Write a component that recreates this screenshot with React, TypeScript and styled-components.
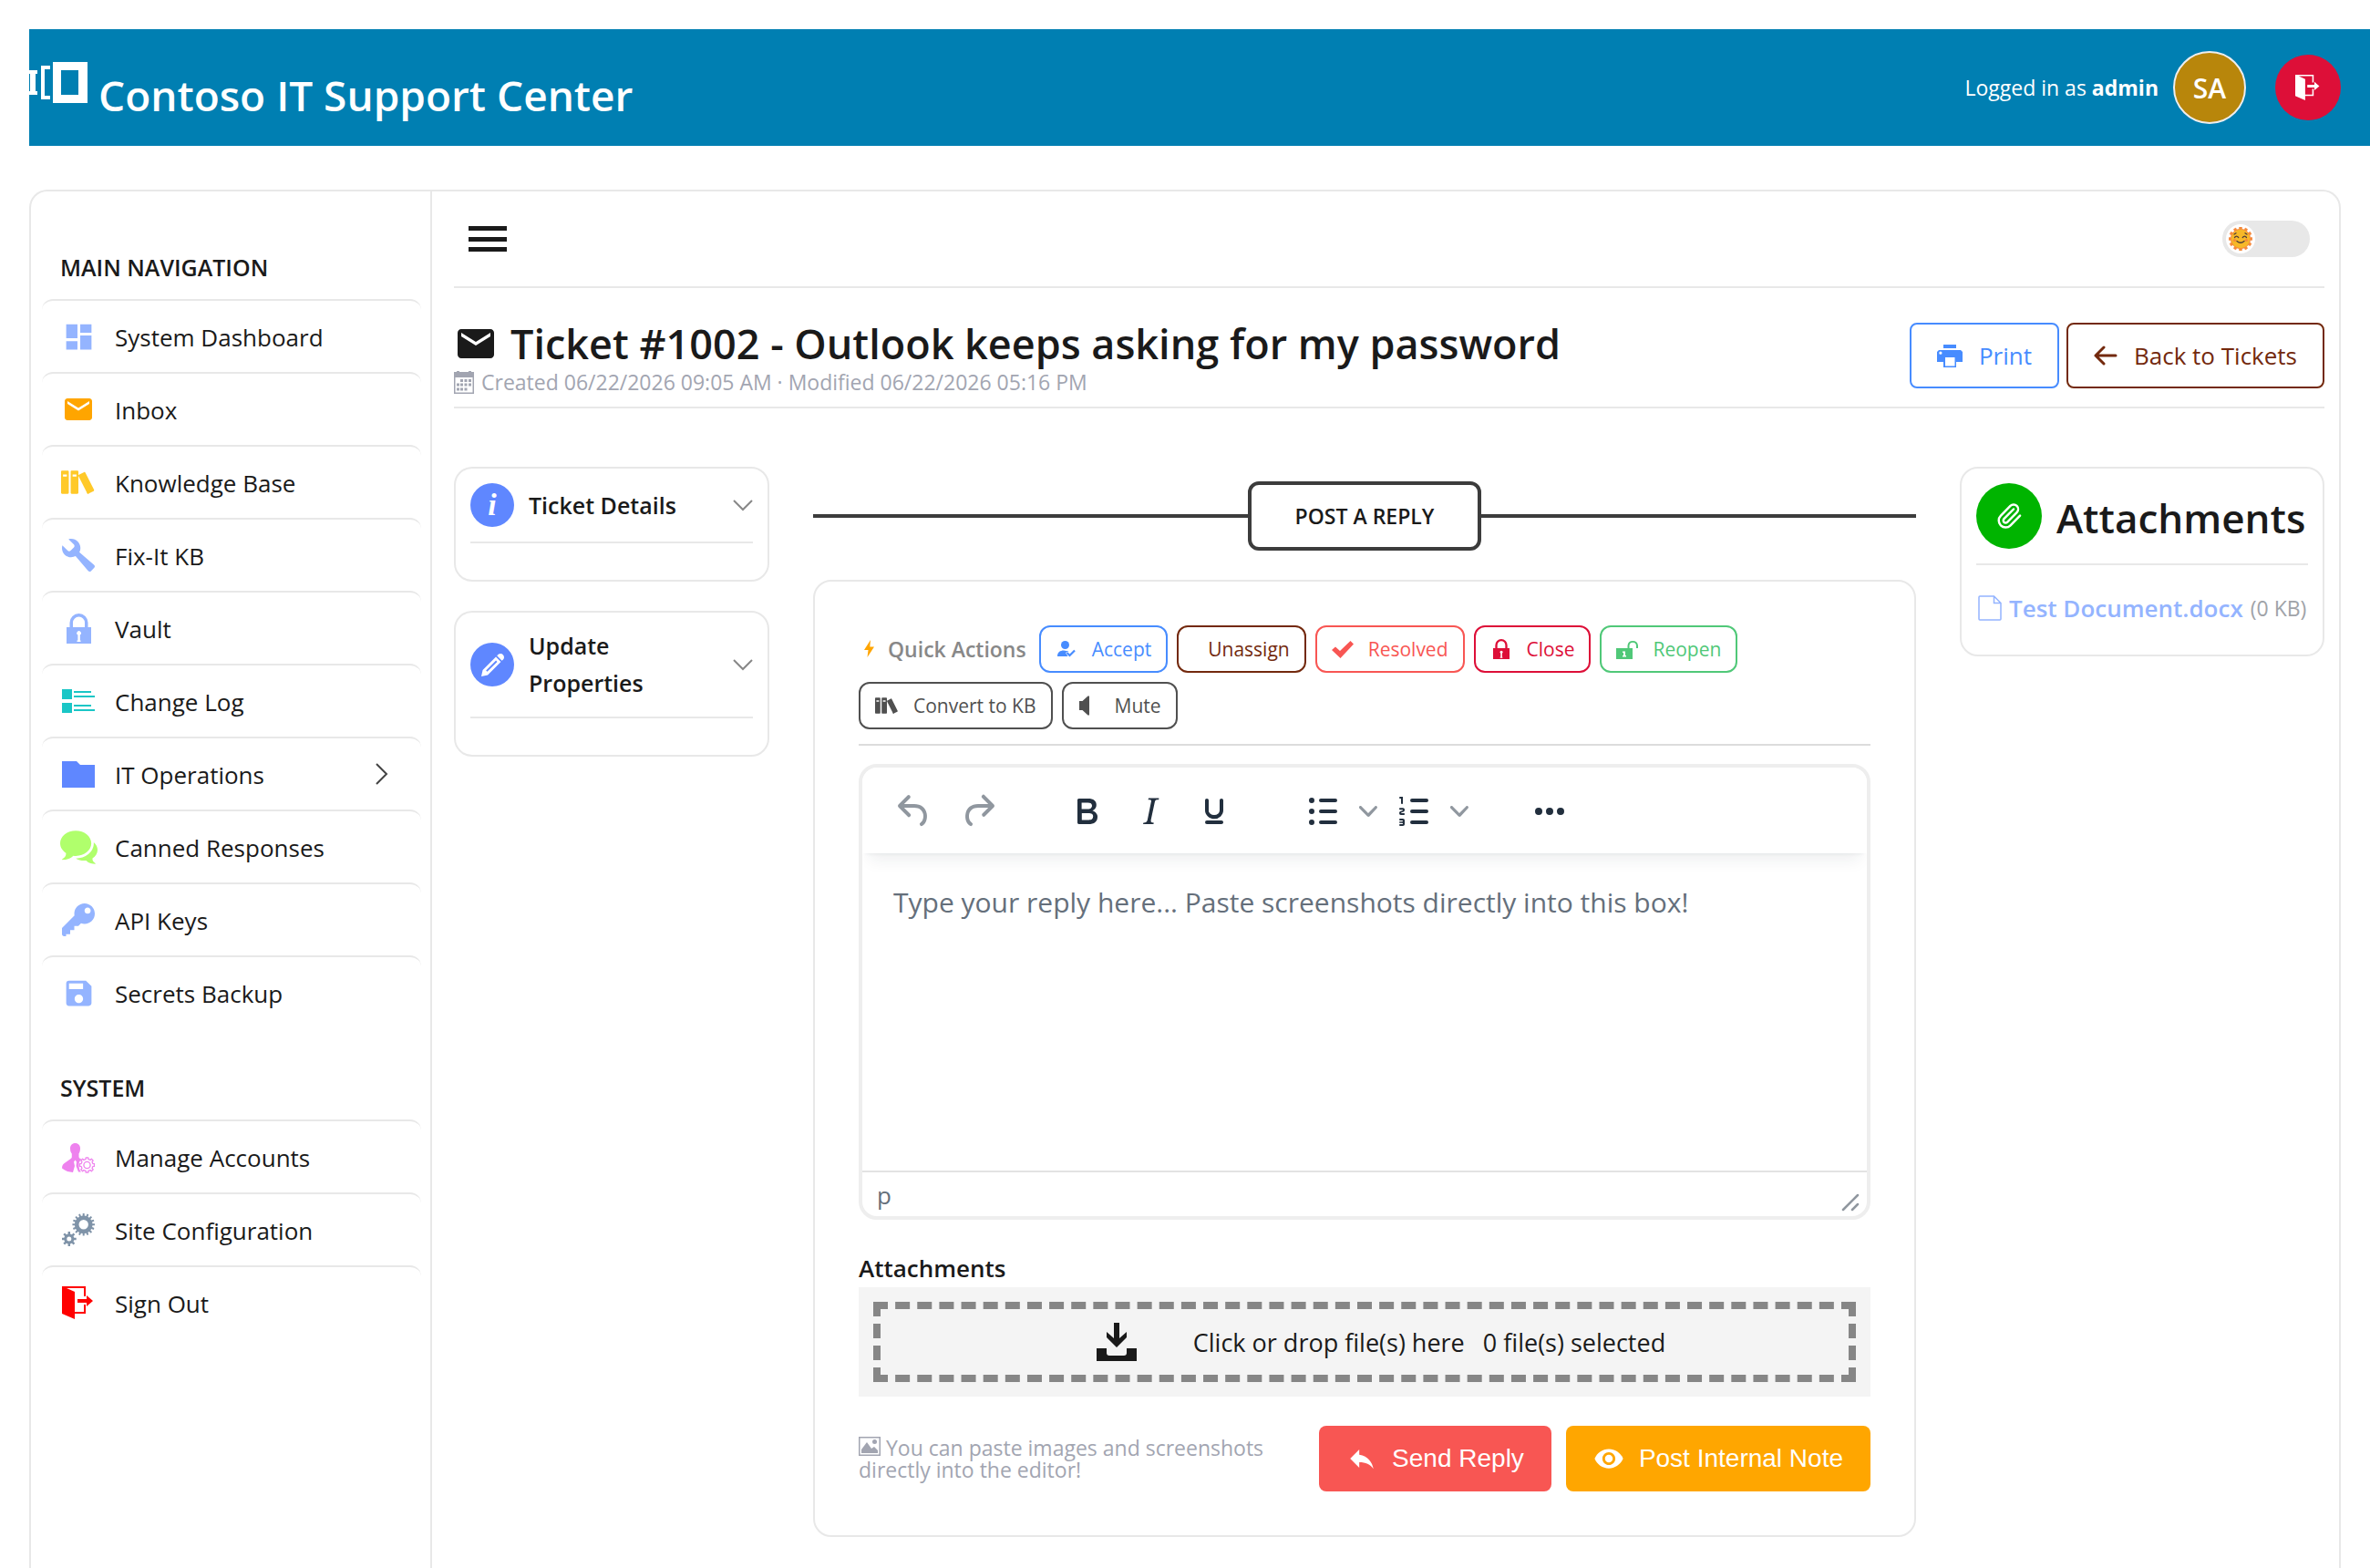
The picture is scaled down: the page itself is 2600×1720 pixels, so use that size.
import React, { useState } from "react";
import styled, { createGlobalStyle } from "styled-components";
import { MdDashboard, MdEmail, MdReply, MdSave, MdVisibility } from "react-icons/md";
import { ImBooks, ImBubbles2, ImKey, ImPencil, ImWrench } from "react-icons/im";
import { Paperclip } from "lucide-react";

const ink = "#1a1a1a";
const line = "#e8e8e8";
const softBlue = "#94b4ff";
const royal = "#5f87ff";
const muted = "#a2a5b1";
const tool = "#222f3e";

const GlobalStyle = createGlobalStyle`
  *, *::before, *::after { box-sizing: border-box; }
  body {
    margin: 0;
    background: #fff;
    color: ${ink};
    font-family: "Open Sans", "Noto Sans", sans-serif;
    font-size: 26px;
  }
  h1, h2, h3, p, ul { margin: 0; padding: 0; }
  button, textarea, input { font-family: inherit; }
  button { cursor: pointer; }
  svg { display: block; flex: none; }
`;

/* ---------- icons ---------- */

const gear = (cx: number, cy: number, outer: number, inner: number, teeth: number) => {
  const pts: string[] = [];
  const step = (Math.PI * 2) / teeth;
  for (let i = 0; i < teeth; i++) {
    const a = i * step - Math.PI / 2;
    [
      [-0.27, inner],
      [-0.2, outer],
      [0.2, outer],
      [0.27, inner],
    ].forEach(([k, r]) => {
      pts.push(`${(cx + Math.cos(a + k * step) * r).toFixed(2)} ${(cy + Math.sin(a + k * step) * r).toFixed(2)}`);
    });
  }
  return `M${pts.join("L")}Z`;
};
const hole = (cx: number, cy: number, r: number) =>
  `M${cx - r} ${cy}a${r} ${r} 0 1 0 ${2 * r} 0a${r} ${r} 0 1 0 ${-2 * r} 0Z`;

const ExitIcon = ({ size = 36 }: { size?: number }) => (
  <svg width={size} height={size} viewBox="0 0 36 36" fill="currentColor" aria-hidden="true">
    <path d="M0 0H26V11H24V2H5L14 6V28H24V20H26V30H14V36L0 30Z" />
    <path d="M17 14H27V10L34 16L27 22V18H17Z" />
  </svg>
);
const LockIcon = ({ width = 27, height = 33 }: { width?: number; height?: number }) => (
  <svg width={width} height={height} viewBox="0 0 27 33" fill="currentColor" aria-hidden="true">
    <path d="M3.5 15V10a10 10 0 0 1 20 0V15H27V33H0V15ZM7 15H20V10a6.5 6.5 0 0 0-13 0ZM12.4 23.5V29.5H11.500V31H15.500V29.500H14.800V23.500A2.300 2.300 0 1 0 12.400 23.500Z" fillRule="evenodd" />
  </svg>
);
const UnlockIcon = () => (
  <svg width="24" height="22" viewBox="0 0 24 22" fill="currentColor" aria-hidden="true">
    <path d="M0 10H12.500V7a5.800 5.800 0 0 1 11.500 0V10H22V7a3.800 3.800 0 0 0-7.500 0V10H18V22H0ZM7 13.500V15H8V18H7V19.500H11V18H10V13.500Z" fillRule="evenodd" />
  </svg>
);
const ChangeLogIcon = () => (
  <svg width="36" height="26" viewBox="0 0 36 26" fill="currentColor" aria-hidden="true">
    <path d="M0 0H11V11H0ZM13 2H32V4H13ZM13 7H36V9H13ZM0 15H11V26H0ZM13 17H32V19H13ZM13 22H36V24H13Z" />
  </svg>
);
const FolderIcon = () => (
  <svg width="36" height="29" viewBox="0 0 36 29" fill="currentColor" aria-hidden="true">
    <path d="M0 0H16L20 4H36V29H0Z" />
  </svg>
);
const ManageIcon = () => (
  <svg width="36" height="36" viewBox="0 0 36 36" aria-hidden="true">
    <path
      fill="currentColor"
      d="M14.500 3C18 3 20 5.500 20 8.500C20 11 19.500 13 18.500 14.500V18C18.800 19.500 20 20 21.500 20.500C19 22.500 18.300 25 18.500 28C18.700 30.500 19.500 33 21 34.500H18L15.500 28L16 23.500L14.500 21.500L13 23.500L14 28L12 35C8 34.500 4 34 0 30.500C0 27 1.500 25.500 4 24L9 20.500C10.500 19.500 10.800 19 10.800 18V14.500C9.500 13 9 11 9 8.500C9 5.500 11 3 14.500 3Z"
    />
    <path d={gear(27.5, 27, 8.3, 6.6, 8)} fill="none" stroke="currentColor" strokeWidth="1.3" strokeLinejoin="round" />
    <circle cx="27.5" cy="27" r="3.6" fill="none" stroke="currentColor" strokeWidth="1.3" />
  </svg>
);
const GearsIcon = () => (
  <svg width="36" height="36" viewBox="0 0 36 36" fill="currentColor" fillRule="evenodd" aria-hidden="true">
    <path d={gear(23.7, 12.3, 12.3, 9.8, 16) + hole(23.7, 12.3, 5.2)} />
    <path d={gear(7.8, 28, 8, 5.6, 8) + hole(7.8, 28, 2.5)} />
  </svg>
);
const ChevronRight = () => (
  <svg width="14" height="24" viewBox="0 0 14 24" fill="none" stroke="#444" strokeWidth="2" aria-hidden="true">
    <path d="M1 1L12 12L1 23" />
  </svg>
);
const ChevronDown = () => (
  <svg width="22" height="13" viewBox="0 0 22 13" fill="none" stroke="#888" strokeWidth="2" aria-hidden="true">
    <path d="M1 1L11 11L21 1" />
  </svg>
);
const MenuIcon = () => (
  <svg width="42" height="30" viewBox="0 0 42 30" fill={ink} aria-hidden="true">
    <path d="M0 1H42V6H0ZM0 13H42V18H0ZM0 24H42V29H0Z" />
  </svg>
);
const SunIcon = () => (
  <svg width="26" height="26" viewBox="0 0 26 26" aria-hidden="true">
    <path d={gear(13, 13, 13, 10.8, 12)} fill="#f58a3c" strokeLinejoin="round" stroke="#f58a3c" strokeWidth="0.6" />
    <circle cx="13" cy="13" r="10.2" fill="#f6b828" />
    <g fill="none" stroke="#4c3a3a" strokeWidth="1.3" strokeLinecap="round">
      <path d="M6.500 11.500Q8.500 8.800 10.700 11.500M15.300 11.500Q17.500 8.800 19.500 11.500M9 15.500Q13 19 17 15.500M6 8L8 6.800M20 8L18 6.800" />
    </g>
    <circle cx="6.5" cy="14.5" r="1.6" fill="#f58a3c" />
    <circle cx="19.5" cy="14.5" r="1.6" fill="#f58a3c" />
  </svg>
);
const CalendarIcon = () => (
  <svg width="22" height="25" viewBox="0 0 22 25" fill="currentColor" aria-hidden="true">
    <path fillRule="evenodd" d="M0 1H3V0H6V1H16V0H19V1H22V25H0ZM1.500 7V23.500H20.500V7Z" />
    <path d="M7 9H10V12H7ZM11.500 9H14.500V12H11.500ZM16 9H19V12H16ZM3 13.500H6V16.500H3ZM7 13.500H10V16.500H7ZM11.500 13.500H14.500V16.500H11.500ZM16 13.500H19V16.500H16ZM3 18.500H6V21.500H3ZM7 18.500H10V21.500H7ZM11.500 18.500H14.500V21.500H11.500Z" />
  </svg>
);
const PrinterIcon = () => (
  <svg width="28" height="25" viewBox="0 0 28 25" fill="currentColor" aria-hidden="true">
    <path d="M7 0H21V4H7Z" />
    <path fillRule="evenodd" d="M2 6H26L28 8V19H21V25H7V19H0V8ZM9 14V23.500H19.500V14ZM2.300 9.200a1.600 1.600 0 1 0 3.200 0a1.600 1.600 0 1 0-3.200 0Z" />
  </svg>
);
const BackIcon = () => (
  <svg width="26" height="22" viewBox="0 0 26 22" fill="none" stroke="currentColor" strokeWidth="3" strokeLinecap="round" strokeLinejoin="round" aria-hidden="true">
    <path d="M11 2L2 11L11 20M2 11H24" />
  </svg>
);
const BoltIcon = () => (
  <svg width="24" height="20" viewBox="0 0 24 20" fill="#ffa500" aria-hidden="true">
    <path d="M13 0L6 11H10.500L9.500 19L17 7.500H12.300Z" />
  </svg>
);
const AcceptIcon = () => (
  <svg width="24" height="18" viewBox="-2 0 24 18" fill="currentColor" aria-hidden="true">
    <circle cx="8.5" cy="4.5" r="4.5" />
    <path d="M0 17C0 12.500 3 10.500 7 10.500L12.500 11.500L9 13L11.500 17Z" />
    <path d="M10.500 13L13.500 16L19 10.500" fill="none" stroke="currentColor" strokeWidth="2.2" />
  </svg>
);
const CheckIcon = () => (
  <svg width="24" height="19" viewBox="0 0 24 19" fill="currentColor" aria-hidden="true">
    <path d="M0 10L4 6.500L9 11L20.500 0L24 3.500L9.500 19Z" />
  </svg>
);
const MuteIcon = () => (
  <svg width="24" height="22" viewBox="-1 0 24 22" fill="currentColor" aria-hidden="true">
    <path d="M0 6H3.500L9.500 0.500H11V21.500H9.500L3.500 16H0Z" />
  </svg>
);
const TrayIcon = () => (
  <svg width="44" height="42" viewBox="0 0 44 42" fill={ink} aria-hidden="true">
    <path d="M19 0H25V17L33 10V16L22 27L11 16V10L19 17Z" />
    <path d="M0 28H11V33Q11 36 14 36H30Q33 36 33 33V28H44V42H0Z" />
  </svg>
);
const ImageIcon = () => (
  <svg width="24" height="21" viewBox="0 0 24 21" fill="currentColor" aria-hidden="true">
    <path fillRule="evenodd" d="M0 0H24V21H0ZM1.500 1.500V19.500H22.500V1.500Z" />
    <path d="M3 18V14L9 6L14 13L17 11L21 15V18Z" />
    <circle cx="17.5" cy="5.5" r="2.5" />
  </svg>
);
const FileIcon = () => (
  <svg width="26" height="28" viewBox="0 0 26 28" fill="none" stroke="currentColor" strokeWidth="1.5" aria-hidden="true">
    <path d="M2 1H17.500L25 8.500V26Q25 27 24 27H2Q1 27 1 26V2Q1 1 2 1ZM17.500 1V8.500H25" />
  </svg>
);
const LogoMark = () => (
  <svg width="64" height="128" viewBox="0 0 64 128" fill="#fff" aria-hidden="true">
    <path d="M0 45H9V49H7V68H9V72H0V68H1V49H0ZM13 40H23V44H17V73H23V77H13Z" />
    <path fillRule="evenodd" d="M26 36H64V81H26ZM35 45V72H54V45Z" />
  </svg>
);

const toolPaths = {
  undo: "M6.400 8H12c3.700 0 6.200 2 6.800 5.100.6 2.700-.4 5.600-2.300 6.800a1 1 0 0 1-1-1.800c1.100-.6 1.800-2.700 1.400-4.600-.5-2.100-2.100-3.500-4.900-3.500H6.400l3.300 3.300a1 1 0 1 1-1.400 1.400l-5-5a1 1 0 0 1 0-1.400l5-5a1 1 0 0 1 1.400 1.400L6.400 8z",
  redo: "M17.600 10H12c-2.800 0-4.400 1.400-4.900 3.500-.4 2 .3 4 1.400 4.600a1 1 0 1 1-1 1.800c-2-1.200-2.900-4.100-2.300-6.800.6-3 3-5.100 6.800-5.100h5.600l-3.300-3.300a1 1 0 1 1 1.400-1.400l5 5a1 1 0 0 1 0 1.400l-5 5a1 1 0 0 1-1.400-1.400l3.300-3.300z",
  bold: "M7.800 19c-.3 0-.5 0-.6-.2l-.2-.5V5.700c0-.2 0-.4.2-.5l.6-.2h5c1.500 0 2.700.3 3.500 1 .7.6 1.100 1.400 1.100 2.500a3 3 0 0 1-.6 1.900c-.4.6-1 1-1.600 1.200.4.1.9.3 1.300.6s.8.7 1 1.200c.4.4.5 1 .5 1.600 0 1.300-.4 2.300-1.300 3-.8.7-2.100 1-3.800 1H7.800zm5-8.300c.6 0 1.200-.1 1.600-.5.4-.3.6-.7.6-1.300 0-1.100-.8-1.700-2.300-1.700H9.300v3.500h3.400zm.5 6c.7 0 1.300-.1 1.700-.4.4-.4.6-.9.6-1.500s-.2-1-.7-1.400c-.4-.3-1-.4-2-.4H9.400v3.800h4z",
  italic: "m16.700 4.700-.1.9h-.3c-.6 0-1 0-1.400.3-.3.3-.4.6-.5 1.100l-2.100 9.800v.6c0 .5.4.8 1.400.8h.2l-.2.8H8l.2-.8h.2c1.100 0 1.800-.5 2-1.500l2-9.800.1-.5c0-.6-.4-.8-1.400-.8h-.3l.2-.9h5.800z",
  underline: "M16 5c.6 0 1 .4 1 1v5.500a4 4 0 0 1-.4 1.800l-1 1.400a5.300 5.300 0 0 1-5.500 1 5 5 0 0 1-1.600-1c-.5-.4-.8-.9-1.100-1.400a4 4 0 0 1-.4-1.800V6c0-.6.4-1 1-1s1 .4 1 1v5.500c0 .3 0 .6.2 1l.6.7a3.300 3.300 0 0 0 2.200.8 3.400 3.400 0 0 0 2.200-.8c.3-.2.4-.5.6-.8l.2-.9V6c0-.6.4-1 1-1ZM8 17h8c.6 0 1 .4 1 1s-.4 1-1 1H8a1 1 0 0 1 0-2Z",
  bullets: "M11 5h8a1 1 0 0 1 0 2h-8a1 1 0 0 1 0-2ZM11 11h8a1 1 0 0 1 0 2h-8a1 1 0 0 1 0-2ZM11 17h8a1 1 0 0 1 0 2h-8a1 1 0 0 1 0-2ZM4.500 6a1.500 1.500 0 1 0 3 0a1.500 1.500 0 1 0-3 0ZM4.500 12a1.500 1.500 0 1 0 3 0a1.500 1.500 0 1 0-3 0ZM4.500 18a1.500 1.500 0 1 0 3 0a1.500 1.500 0 1 0-3 0Z",
  numbers: "M11 5h8a1 1 0 0 1 0 2h-8a1 1 0 0 1 0-2ZM11 11h8a1 1 0 0 1 0 2h-8a1 1 0 0 1 0-2ZM11 17h8a1 1 0 0 1 0 2h-8a1 1 0 0 1 0-2ZM6 4v3.500c0 .3-.2.500-.500.500a.500.500 0 0 1-.500-.500V5h-.500a.500.500 0 0 1 0-1H6Zm-1 8.800.200.200h1.300c.300 0 .500.200.500.500s-.200.500-.500.500H4.900a1 1 0 0 1-.9-1V13c0-.400.300-.800.600-1l1.200-.400.200-.300a.200.200 0 0 0-.200-.200H4.500a.500.500 0 0 1-.500-.500c0-.300.200-.500.500-.500h1.600c.500 0 .900.400.900 1v.100c0 .400-.300.800-.600 1l-1.200.400-.200.300ZM7 17v2c0 .600-.400 1-1 1H4.500a.500.500 0 0 1 0-1h1.200c.200 0 .300-.100.300-.300 0-.200-.100-.300-.300-.300H4.400a.400.400 0 1 1 0-.800h1.300c.200 0 .300-.100.300-.300 0-.200-.100-.300-.300-.300H4.500a.500.500 0 1 1 0-1H6c.600 0 1 .400 1 1Z",
  more: "M4 12a2 2 0 1 0 4 0a2 2 0 1 0-4 0ZM10 12a2 2 0 1 0 4 0a2 2 0 1 0-4 0ZM16 12a2 2 0 1 0 4 0a2 2 0 1 0-4 0Z",
};

/* ---------- page frame ---------- */

const Page = styled.div`
  display: flex;
  flex-direction: column;
  min-height: 100vh;
  padding: 32px 0 0 32px;
`;
const Header = styled.header`
  display: flex;
  align-items: center;
  justify-content: space-between;
  height: 128px;
  padding-right: 32px;
  background: #007fb2;
  color: #fff;
`;
const Brand = styled.div`
  display: flex;
  align-items: center;
  gap: 12px;
`;
const BrandName = styled.span`
  padding-top: 16px;
  font-size: 46px;
  font-weight: 600;
  line-height: 54px;
`;
const Account = styled.div`
  display: flex;
  align-items: center;
  font-size: 23px;
`;
const Avatar = styled.span`
  display: grid;
  place-items: center;
  width: 80px;
  height: 80px;
  margin: 0 32px 0 16px;
  border: 2px solid #eee;
  border-radius: 50%;
  background: #b8860b;
  font-size: 30px;
  font-weight: 600;
`;
const LogoutButton = styled.button`
  display: grid;
  place-items: center;
  width: 72px;
  height: 72px;
  padding: 0;
  border: 0;
  border-radius: 50%;
  background: #dd0f38;
  color: #fff;
`;
const Shell = styled.div`
  display: flex;
  flex: 1;
  margin: 48px 32px 0 0;
  border: 2px solid ${line};
  border-bottom: 0;
  border-radius: 20px 20px 0 0;
`;

/* ---------- sidebar ---------- */

const Sidebar = styled.nav`
  flex: none;
  width: 440px;
  padding: 18px 10px 0 12px;
  border-right: 2px solid ${line};
`;
const NavHeading = styled.h2`
  padding: 46px 20px 16px;
  font-size: 25px;
  font-weight: 600;
  line-height: 38px;
`;
const NavList = styled.ul`
  list-style: none;
`;
const NavLink = styled.a<{ $tone: string }>`
  display: flex;
  align-items: center;
  gap: 22px;
  height: 80px;
  padding: 0 36px 0 22px;
  border-top: 2px solid ${line};
  border-radius: 12px;
  color: ${ink};
  text-decoration: none;

  > span:first-child {
    color: ${(p) => p.$tone};
  }
`;
const NavIcon = styled.span`
  display: flex;
  flex: none;
  justify-content: center;
  width: 36px;
`;
const NavText = styled.span`
  flex: 1;
  padding-top: 2px;
`;

/* ---------- content ---------- */

const Content = styled.main`
  flex: 1;
  min-width: 0;
  padding: 0 16px 32px 24px;
`;
const TopBar = styled.div`
  display: flex;
  align-items: center;
  justify-content: space-between;
  height: 106px;
  padding: 0 16px;
  border-bottom: 2px solid ${line};
`;
const MenuButton = styled.button`
  padding: 0;
  border: 0;
  background: none;
`;
const Switch = styled.label`
  display: flex;
  width: 96px;
  height: 40px;
  padding: 4px;
  border-radius: 20px;
  background: ${line};
  cursor: pointer;

  input {
    position: absolute;
    opacity: 0;
  }
  input:checked + span {
    margin-left: auto;
  }
`;
const Knob = styled.span`
  display: grid;
  place-items: center;
  width: 32px;
  height: 32px;
  border-radius: 50%;
  background: #fff;
`;
const TicketBar = styled.div`
  display: flex;
  align-items: flex-start;
  justify-content: space-between;
  padding: 34px 0 12px;
  border-bottom: 2px solid ${line};
`;
const TicketTitle = styled.h1`
  display: flex;
  align-items: center;
  gap: 14px;
  font-size: 45px;
  font-weight: 600;
  line-height: 54px;
`;
const TicketMeta = styled.p`
  display: flex;
  align-items: center;
  gap: 8px;
  color: ${muted};
  font-size: 23px;
  line-height: 30px;
`;
const ButtonRow = styled.div`
  display: flex;
  flex: none;
  gap: 8px;
  padding-top: 4px;
`;
const OutlineButton = styled.button<{ $tone: string }>`
  display: flex;
  align-items: center;
  gap: 18px;
  height: 72px;
  padding: 0 28px;
  border: 2px solid currentColor;
  border-radius: 8px;
  background: #fff;
  color: ${(p) => p.$tone};
  font-size: 26px;
`;
const Columns = styled.div`
  display: grid;
  grid-template-columns: 346px minmax(0, 1fr) 400px;
  align-items: start;
  gap: 48px;
  margin-top: 64px;
`;
const Stack = styled.div`
  display: grid;
  gap: 32px;
`;
const Panel = styled.section`
  padding: 16px;
  border: 2px solid ${line};
  border-radius: 20px;
`;
const PanelHead = styled.div`
  display: flex;
  align-items: center;
  gap: 16px;
  width: 100%;
  padding: 0 0 16px;
  border: 0;
  border-bottom: 2px solid ${line};
  background: none;
  color: ${ink};
  text-align: left;
`;
const PanelTitle = styled.span`
  flex: 1;
  font-size: 25px;
  font-weight: 600;
  line-height: 41px;
`;
const PanelBody = styled.div`
  height: 24px;
`;
const Badge = styled.span<{ $tone: string; $size: number }>`
  display: grid;
  flex: none;
  place-items: center;
  width: ${(p) => p.$size}px;
  height: ${(p) => p.$size}px;
  border-radius: 50%;
  background: ${(p) => p.$tone};
  color: #fff;
`;
const InfoLetter = styled.i`
  font: italic bold 34px/34px "Liberation Serif", serif;
`;

/* ---------- reply ---------- */

const Divider = styled.div`
  display: flex;
  align-items: center;
  margin: 16px 0 32px;

  &::before,
  &::after {
    content: "";
    flex: 1;
    height: 4px;
    background: #3c3c3c;
  }
`;
const DividerLabel = styled.h2`
  padding: 0 48px;
  border: 4px solid #3c3c3c;
  border-radius: 12px;
  font-size: 23px;
  font-weight: 600;
  line-height: 68px;
`;
const ReplyCard = styled.form`
  padding: 48px;
  border: 2px solid ${line};
  border-radius: 20px;
`;
const QuickActions = styled.div`
  display: flex;
  flex-wrap: wrap;
  align-items: center;
  gap: 10px;
  margin-bottom: 20px;
  padding-bottom: 16px;
  border-bottom: 2px solid #dcdcdc;
`;
const QuickLabel = styled.span`
  display: flex;
  align-items: center;
  gap: 8px;
  margin-right: 4px;
  color: #888;
  font-size: 23px;
  font-weight: 600;
`;
const QuickButton = styled.button<{ $tone: string }>`
  display: flex;
  align-items: center;
  gap: 16px;
  height: 52px;
  padding: 0 16px;
  border: 2px solid currentColor;
  border-radius: 12px;
  background: #fff;
  color: ${(p) => p.$tone};
  font-size: 21px;
`;
const QuickIcon = styled.span`
  display: flex;
`;
const Editor = styled.div`
  display: flex;
  flex-direction: column;
  height: 500px;
  overflow: hidden;
  border: 4px solid #eee;
  border-radius: 20px;
`;
const Toolbar = styled.div`
  position: relative;
  display: flex;
  flex: none;
  align-items: center;
  gap: 49px;
  height: 94px;
  padding: 2px 22px 0;
  background: #fff;
  box-shadow: 0 4px 4px -4px rgba(34, 47, 62, 0.1), 0 16px 16px -8px rgba(34, 47, 62, 0.07);
`;
const ToolGroup = styled.div`
  display: flex;
`;
const ToolButton = styled.button<{ $dim?: boolean; $narrow?: boolean }>`
  display: grid;
  place-items: center;
  width: ${(p) => (p.$narrow ? 30 : 70)}px;
  height: 56px;
  padding: 0;
  border: 0;
  background: none;
  color: ${(p) => (p.$dim ? "#90979f" : tool)};
`;
const Message = styled.textarea`
  flex: 1;
  padding: 32px 34px;
  border: 0;
  outline: 0;
  resize: none;
  color: ${ink};
  font-size: 30px;
  line-height: 44px;

  &::placeholder {
    color: #656f7b;
    opacity: 1;
  }
`;
const StatusBar = styled.div`
  display: flex;
  flex: none;
  align-items: flex-end;
  justify-content: space-between;
  height: 50px;
  padding: 0 8px 5px 16px;
  border-top: 2px solid #e3e3e3;
  color: #656f7b;
`;
const FieldLabel = styled.label`
  display: block;
  margin-top: 32px;
  font-weight: 600;
  line-height: 42px;
`;
const DropArea = styled.div`
  padding: 16px;
  background: #f4f4f4;
`;
const DropZone = styled.label`
  display: flex;
  align-items: center;
  justify-content: center;
  height: 88px;
  padding-left: 36px;
  border: 8px dashed #868686;
  font-size: 27px;
  cursor: pointer;

  input {
    position: absolute;
    width: 1px;
    height: 1px;
    opacity: 0;
  }
`;
const DropText = styled.span`
  margin: 0 20px 0 62px;
`;
const Footer = styled.div`
  display: flex;
  align-items: center;
  justify-content: space-between;
  margin-top: 32px;
`;
const Hint = styled.p`
  max-width: 460px;
  color: ${muted};
  font-size: 23px;
  line-height: 24px;

  svg {
    display: inline-block;
  }
`;
const SubmitRow = styled.div`
  display: flex;
  flex: none;
  gap: 16px;
`;
const SubmitButton = styled.button<{ $tone: string }>`
  display: flex;
  align-items: center;
  gap: 16px;
  height: 72px;
  padding: 0 30px;
  border: 0;
  border-radius: 8px;
  background: ${(p) => p.$tone};
  color: #fff;
  font-family: "Liberation Sans", sans-serif;
  font-size: 28px;
`;

/* ---------- attachments ---------- */

const AttachTitle = styled.h2`
  padding-top: 4px;
  font-size: 44px;
  font-weight: 600;
  line-height: 54px;
`;
const FileRow = styled.p`
  display: flex;
  align-items: center;
  gap: 8px;
  padding: 26px 0 14px 2px;
  color: #a0a3a8;
  font-size: 23px;
  line-height: 42px;
`;
const FileLink = styled.a`
  display: flex;
  align-items: center;
  gap: 8px;
  color: ${softBlue};
  font-size: 26px;
  font-weight: 600;
  text-decoration: none;
`;

/* ---------- data ---------- */

type NavEntry = { label: string; icon: React.ReactNode; tone: string; open?: boolean };

const mainNav: NavEntry[] = [
  { label: "System Dashboard", icon: <MdDashboard size={37} />, tone: softBlue },
  { label: "Inbox", icon: <MdEmail size={36} />, tone: "#ffa500" },
  { label: "Knowledge Base", icon: <ImBooks size={38} />, tone: "#ffc929" },
  { label: "Fix-It KB", icon: <ImWrench size={36} />, tone: softBlue },
  { label: "Vault", icon: <LockIcon />, tone: softBlue },
  { label: "Change Log", icon: <ChangeLogIcon />, tone: "#1ac6c6" },
  { label: "IT Operations", icon: <FolderIcon />, tone: royal, open: true },
  { label: "Canned Responses", icon: <ImBubbles2 size={41} />, tone: "#b0ff6c" },
  { label: "API Keys", icon: <ImKey size={36} />, tone: softBlue },
  { label: "Secrets Backup", icon: <MdSave size={37} />, tone: softBlue },
];
const systemNav: NavEntry[] = [
  { label: "Manage Accounts", icon: <ManageIcon />, tone: "#ee82ee" },
  { label: "Site Configuration", icon: <GearsIcon />, tone: "#7f93a8" },
  { label: "Sign Out", icon: <ExitIcon />, tone: "#ff0000" },
];
const actions: NavEntry[] = [
  { label: "Accept", icon: <AcceptIcon />, tone: "#478cff" },
  { label: "Unassign", icon: null, tone: "#73290d" },
  { label: "Resolved", icon: <CheckIcon />, tone: "#f85653" },
  { label: "Close", icon: <LockIcon width={24} height={22} />, tone: "#dd0f38" },
  { label: "Reopen", icon: <UnlockIcon />, tone: "#50c878" },
  { label: "Convert to KB", icon: <ImBooks size={26} />, tone: "#505050" },
  { label: "Mute", icon: <MuteIcon />, tone: "#505050" },
];

const NavSection = ({ title, entries }: { title: string; entries: NavEntry[] }) => (
  <>
    <NavHeading>{title}</NavHeading>
    <NavList>
      {entries.map((e) => (
        <li key={e.label}>
          <NavLink href="#" $tone={e.tone}>
            <NavIcon>{e.icon}</NavIcon>
            <NavText>{e.label}</NavText>
            {e.open && <ChevronRight />}
          </NavLink>
        </li>
      ))}
    </NavList>
  </>
);

const Tool = ({ name, label, dim }: { name: keyof typeof toolPaths; label: string; dim?: boolean }) => (
  <ToolButton type="button" aria-label={label} $dim={dim}>
    <svg width="48" height="48" viewBox="0 0 24 24" fill="currentColor" fillRule="evenodd" aria-hidden="true">
      <path d={toolPaths[name]} />
    </svg>
  </ToolButton>
);
const ToolMenu = ({ label }: { label: string }) => (
  <ToolButton type="button" aria-label={label} $dim $narrow>
    <svg width="20" height="20" viewBox="0 0 10 10" fill="currentColor" aria-hidden="true">
      <path d="M8.700 2.200c.3-.3.8-.3 1 0 .4.4.4.9 0 1.200L5.700 7.800c-.3.3-.9.3-1.200 0L.2 3.400a.8.8 0 0 1 0-1.200c.3-.3.8-.3 1.100 0L5 6l3.700-3.800Z" />
    </svg>
  </ToolButton>
);

export default function App() {
  const [dark, setDark] = useState(false);
  const [files, setFiles] = useState(0);

  return (
    <>
      <GlobalStyle />
      <Page>
        <Header>
          <Brand>
            <LogoMark />
            <BrandName>Contoso IT Support Center</BrandName>
          </Brand>
          <Account>
            <span>
              Logged in as <b>admin</b>
            </span>
            <Avatar>SA</Avatar>
            <LogoutButton type="button" aria-label="Sign out">
              <ExitIcon size={28} />
            </LogoutButton>
          </Account>
        </Header>

        <Shell>
          <Sidebar>
            <NavSection title="MAIN NAVIGATION" entries={mainNav} />
            <NavSection title="SYSTEM" entries={systemNav} />
          </Sidebar>

          <Content>
            <TopBar>
              <MenuButton type="button" aria-label="Toggle navigation">
                <MenuIcon />
              </MenuButton>
              <Switch>
                <input type="checkbox" aria-label="Dark theme" checked={dark} onChange={() => setDark(!dark)} />
                <Knob>
                  <SunIcon />
                </Knob>
              </Switch>
            </TopBar>

            <TicketBar>
              <div>
                <TicketTitle>
                  <MdEmail size={48} />
                  Ticket #1002 - Outlook keeps asking for my password
                </TicketTitle>
                <TicketMeta>
                  <CalendarIcon />
                  Created 06/22/2026 09:05 AM · Modified 06/22/2026 05:16 PM
                </TicketMeta>
              </div>
              <ButtonRow>
                <OutlineButton type="button" $tone="#478cff">
                  <PrinterIcon />
                  Print
                </OutlineButton>
                <OutlineButton type="button" $tone="#73290d">
                  <BackIcon />
                  Back to Tickets
                </OutlineButton>
              </ButtonRow>
            </TicketBar>

            <Columns>
              <Stack>
                <Panel>
                  <PanelHead as="button">
                    <Badge $tone={royal} $size={48}>
                      <InfoLetter aria-hidden="true">i</InfoLetter>
                    </Badge>
                    <PanelTitle>Ticket Details</PanelTitle>
                    <ChevronDown />
                  </PanelHead>
                  <PanelBody />
                </Panel>
                <Panel>
                  <PanelHead as="button">
                    <Badge $tone={royal} $size={48}>
                      <ImPencil size={25} />
                    </Badge>
                    <PanelTitle>Update Properties</PanelTitle>
                    <ChevronDown />
                  </PanelHead>
                  <PanelBody />
                </Panel>
              </Stack>

              <div>
                <Divider>
                  <DividerLabel>POST A REPLY</DividerLabel>
                </Divider>
                <ReplyCard onSubmit={(e) => e.preventDefault()}>
                  <QuickActions>
                    <QuickLabel>
                      <BoltIcon />
                      Quick Actions
                    </QuickLabel>
                    {actions.map((a) => (
                      <QuickButton key={a.label} type="button" $tone={a.tone}>
                        <QuickIcon>{a.icon}</QuickIcon>
                        {a.label}
                      </QuickButton>
                    ))}
                  </QuickActions>

                  <Editor>
                    <Toolbar>
                      <ToolGroup>
                        <Tool name="undo" label="Undo" dim />
                        <Tool name="redo" label="Redo" dim />
                      </ToolGroup>
                      <ToolGroup>
                        <Tool name="bold" label="Bold" />
                        <Tool name="italic" label="Italic" />
                        <Tool name="underline" label="Underline" />
                      </ToolGroup>
                      <ToolGroup>
                        <Tool name="bullets" label="Bullet list" />
                        <ToolMenu label="Bullet list styles" />
                        <Tool name="numbers" label="Numbered list" />
                        <ToolMenu label="Numbered list styles" />
                      </ToolGroup>
                      <ToolGroup>
                        <Tool name="more" label="More" />
                      </ToolGroup>
                    </Toolbar>
                    <Message
                      aria-label="Reply"
                      placeholder="Type your reply here... Paste screenshots directly into this box!"
                    />
                    <StatusBar>
                      <span>p</span>
                      <svg width="20" height="20" viewBox="0 0 20 20" stroke="#90979f" strokeWidth="2.5" strokeLinecap="round" aria-hidden="true">
                        <path d="M2 18L18 2M12 18L18 12" />
                      </svg>
                    </StatusBar>
                  </Editor>

                  <FieldLabel htmlFor="reply-files">Attachments</FieldLabel>
                  <DropArea>
                    <DropZone>
                      <input
                        id="reply-files"
                        type="file"
                        multiple
                        onChange={(e) => setFiles(e.target.files ? e.target.files.length : 0)}
                      />
                      <TrayIcon />
                      <DropText>Click or drop file(s) here</DropText>
                      <span>{`${files} file(s) selected`}</span>
                    </DropZone>
                  </DropArea>

                  <Footer>
                    <Hint>
                      <ImageIcon /> You can paste images and screenshots directly into the editor!
                    </Hint>
                    <SubmitRow>
                      <SubmitButton type="submit" $tone="#f85653">
                        <MdReply size={34} />
                        Send Reply
                      </SubmitButton>
                      <SubmitButton type="submit" $tone="#ffa600">
                        <MdVisibility size={34} />
                        Post Internal Note
                      </SubmitButton>
                    </SubmitRow>
                  </Footer>
                </ReplyCard>
              </div>

              <Panel>
                <PanelHead>
                  <Badge $tone="#00b400" $size={72}>
                    <Paperclip size={30} strokeWidth={2} />
                  </Badge>
                  <AttachTitle>Attachments</AttachTitle>
                </PanelHead>
                <FileRow>
                  <FileLink href="#">
                    <FileIcon />
                    Test Document.docx
                  </FileLink>
                  <span>(0 KB)</span>
                </FileRow>
              </Panel>
            </Columns>
          </Content>
        </Shell>
      </Page>
    </>
  );
}
